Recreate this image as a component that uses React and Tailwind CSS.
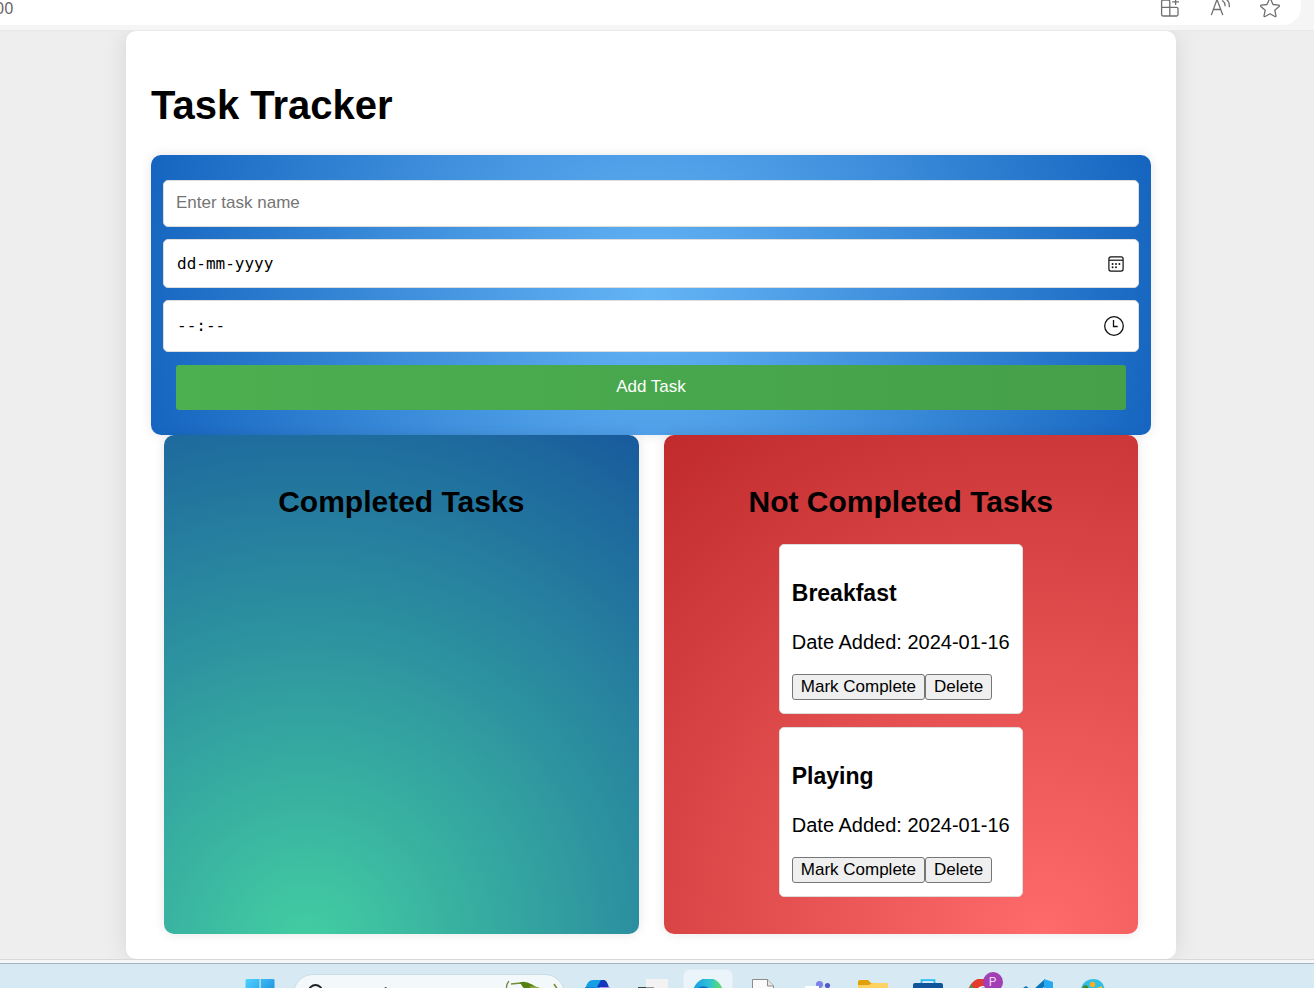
import React, { useState } from 'react';

const TASKS = [
  { id: 1, name: 'Breakfast', date: '2024-01-16' },
  { id: 2, name: 'Playing', date: '2024-01-16' },
];

function CalendarIcon() {
  return (
    <svg width="16" height="16" viewBox="0 0 16 16" fill="none" stroke="#111" strokeWidth="1.2" aria-hidden="true">
      <rect x="0.9" y="0.9" width="14.2" height="14.2" rx="2" />
      <path d="M1 4.2h14" />
      <g fill="#111" stroke="none">
        <circle cx="4.6" cy="8" r="0.95" />
        <circle cx="8" cy="8" r="0.95" />
        <circle cx="11.4" cy="8" r="0.95" />
        <circle cx="4.6" cy="11.2" r="0.95" />
        <circle cx="8" cy="11.2" r="0.95" />
      </g>
    </svg>
  );
}

function ClockIcon() {
  return (
    <svg width="20" height="20" viewBox="0 0 20 20" fill="none" stroke="#111" strokeWidth="1.3" aria-hidden="true">
      <circle cx="10" cy="10" r="9.3" />
      <path d="M9.5 4v6.5h4.2" />
    </svg>
  );
}

function PickerField({ label, placeholder, height, children }) {
  return (
    <div className={`flex items-center rounded-[5px] border border-[#ddd] bg-white pr-[14px] pl-[13px] ${height}`}>
      <input
        type="text"
        aria-label={label}
        placeholder={placeholder}
        className="min-w-0 flex-1 bg-transparent font-['DejaVu_Sans_Mono',monospace] text-base text-black outline-none placeholder:text-black"
      />
      <button type="button" aria-label={`Open ${label} picker`} className="shrink-0">
        {children}
      </button>
    </div>
  );
}

function TaskForm() {
  return (
    <form
      onSubmit={(e) => e.preventDefault()}
      className="relative flex flex-col gap-3 rounded-[10px] bg-[radial-gradient(circle,#64b5f6,#1565c0)] px-3 py-[25px] shadow-[0_0_12px_rgba(0,0,0,0.1)]"
    >
      <input
        type="text"
        aria-label="Task name"
        placeholder="Enter task name"
        className="h-[47px] w-full rounded-[5px] border border-[#ddd] bg-white px-3 pb-px text-[17px] outline-none placeholder:text-[#757575]"
      />
      <PickerField label="date" placeholder="dd-mm-yyyy" height="h-[49px]">
        <CalendarIcon />
      </PickerField>
      <PickerField label="time" placeholder="--:--" height="h-[52px]">
        <ClockIcon />
      </PickerField>
      <button
        type="submit"
        className="mx-[13px] mt-px h-[45px] rounded-[3px] bg-[linear-gradient(to_right,#4caf50,#45a049)] pb-px text-[17px] text-white"
      >
        Add Task
      </button>
    </form>
  );
}

const smallButton =
  'h-[26px] rounded-[3px] border border-[#767676] bg-[#efefef] px-2 text-[17px] leading-5 text-black';

function TaskCard({ task, onComplete, onDelete }) {
  return (
    <li className="rounded-[5px] border border-[#ddd] bg-white px-3 pt-3 pb-[13px]">
      <h3 className="my-[23px] text-[23px] leading-[27px] font-bold">{task.name}</h3>
      <p className="mb-5 text-xl leading-6">Date Added: {task.date}</p>
      <div className="flex">
        {onComplete && (
          <button type="button" onClick={onComplete} className={smallButton}>
            Mark Complete
          </button>
        )}
        <button type="button" onClick={onDelete} className={smallButton}>
          Delete
        </button>
      </div>
    </li>
  );
}

function Column({ title, background, children }) {
  return (
    <section className={`flex flex-1 flex-col items-center rounded-[10px] px-[25px] pt-[25px] pb-[37px] shadow-[0_0_12px_rgba(0,0,0,0.1)] ${background}`}>
      <h2 className="my-[25px] text-[30px] leading-[34px] font-bold">{title}</h2>
      <ul className="flex flex-col gap-[13px]">{children}</ul>
    </section>
  );
}

function BrowserBar() {
  return (
    <header className="h-[30px] shrink-0 bg-[#f5f5f5]">
      <div className="mr-[13px] -mt-[11px] flex h-9 items-center justify-between rounded-br-[18px] bg-white pt-0.5 pr-[21px]">
        <span className="-ml-[5px] font-['Noto_Sans',sans-serif] text-base leading-6 text-[#666]">00</span>
        <div className="flex gap-[30px] text-[#707070]">
          <button type="button" aria-label="Apps">
            <svg width="20" height="20" viewBox="0 0 20 20" fill="none" stroke="currentColor" strokeWidth="1.3">
              <path d="M9.8 9.4V3.5a1.4 1.4 0 0 0-1.4-1.4H3a1.4 1.4 0 0 0-1.4 1.4v13.1A1.4 1.4 0 0 0 3 18h13.600a1.4 1.4 0 0 0 1.400-1.400v-5.800a1.400 1.400 0 0 0-1.400-1.400H1.600M9.800 9.400V18M15.600 0.500v6.500M12.200 3.800h6.800" />
            </svg>
          </button>
          <button type="button" aria-label="Read aloud">
            <svg width="20" height="20" viewBox="0 0 20 20" fill="none" stroke="currentColor" strokeWidth="1.3" strokeLinecap="round">
              <path d="M1.500 16.600 7 1.500l5.600 15.100M3.400 11.500h7.300M12.500 2.800c1.700 1 2.600 2.600 2.600 5M15.500.6c2.600 1.600 4 4.300 3.800 8" />
            </svg>
          </button>
          <button type="button" aria-label="Add to favourites">
            <svg width="20" height="20" viewBox="0 0 20 20" fill="none" stroke="currentColor" strokeWidth="1.3" strokeLinejoin="round">
              <path d="M9.300 1.300q.7-1.200 1.400 0l2.300 5.200 5.700.6q1.300.3.4 1.300l-4.300 3.900 1.200 5.500q.1 1.200-1.100.7L10 15.700l-4.900 2.800q-1.200.5-1.100-.7l1.200-5.500L.9 8.400q-.9-1 .4-1.300L7 6.500z" />
            </svg>
          </button>
        </div>
      </div>
    </header>
  );
}

function AppButton({ label, active, children }) {
  return (
    <button
      type="button"
      aria-label={label}
      className={`flex size-12 shrink-0 items-center justify-center rounded-md ${active ? 'bg-[#ebf4fa] ring-1 ring-[#e2edf3]' : ''}`}
    >
      <svg width="30" height="30" viewBox="0 0 30 30" aria-hidden="true">
        {children}
      </svg>
    </button>
  );
}

function Taskbar() {
  return (
    <footer className="flex h-[60px] shrink-0 items-center justify-center gap-[7px] border-t border-[#a3b5be] bg-[#d7e9f2] pl-[38px]">
      <AppButton label="Start">
        <defs>
          <linearGradient id="start" x1="0" y1="0" x2="1" y2="1">
            <stop offset="0" stopColor="#4fd3ff" />
            <stop offset="1" stopColor="#0a78d4" />
          </linearGradient>
        </defs>
        <path fill="url(#start)" d="M1.5 0H14.500v14H0.5V1zM15.700 0H28.5l1 1v13H15.700zM0.5 15.2H14.500V29H1.5zM15.700 15.2h13.800V28l-1 1H15.700z" />
      </AppButton>
      <label className="mx-0.5 flex h-10 w-[272px] shrink-0 items-center rounded-full border border-[#c9dce5] bg-[#f3f8fb] pl-3">
        <svg width="20" height="20" viewBox="0 0 20 20" fill="none" stroke="#222" strokeWidth="2" aria-hidden="true">
          <circle cx="9.5" cy="7.5" r="6.5" />
          <path d="m5 12.5-4 4.5" />
        </svg>
        <input
          type="text"
          aria-label="Search"
          placeholder="Search"
          className="ml-3 w-0 flex-1 bg-transparent font-['Noto_Sans',sans-serif] text-lg outline-none placeholder:text-[#444]"
        />
        <svg width="62" height="30" viewBox="0 0 62 30" fill="none" aria-hidden="true">
          <path d="M7 2Q3 6 5 16" stroke="#71843b" strokeWidth="1.2" />
          <path d="m9 5 10-1 5 3M52 5l4 6" stroke="#748c35" strokeWidth="1.6" />
          <path d="M18 3.500q5-2 12 2l10 6-13 0-6-3z" fill="#55800f" />
          <path d="m27 7 9 1 7 4-10 1z" fill="#8ead43" />
        </svg>
      </label>
      <AppButton label="Copilot">
        <path d="M2 14Q3 1 10 1h9q4 0 6 8H15q-3 0-5 8z" fill="#169ee5" />
        <path d="m14 8 4-7h3q3 0 5 8z" fill="#1239bb" />
        <path d="M17 8h9q3 1 3 6H17z" fill="#bc8de9" />
        <path d="M2 8h11l-2 10H2z" fill="#1584d1" />
      </AppButton>
      <AppButton label="Task view">
        <path d="M8 0h22v20H8z" fill="#f3f3f3" />
        <path d="M0 8h16v16H0z" fill="#414347" />
        <path d="M8 8h8v8H8z" fill="#8e9092" />
      </AppButton>
      <AppButton label="Edge" active>
        <defs>
          <linearGradient id="edge" x1="0" y1="0" x2="1" y2="0">
            <stop offset="0" stopColor="#1b9de2" />
            <stop offset="0.55" stopColor="#2dc3d6" />
            <stop offset="1" stopColor="#64e056" />
          </linearGradient>
        </defs>
        <circle cx="15" cy="14" r="15" fill="url(#edge)" />
        <path d="M1 13q5-7 11-5.500 5 1 7 6.500L14 28Q2 26 1 13z" fill="#0d6fc0" />
      </AppButton>
      <AppButton label="Document">
        <path d="M4.500.5h15l6 6v23h-21z" fill="#fafafa" stroke="#8c8c8c" />
        <path d="M19.500.5v6.500h6.500" fill="#e6e6e6" stroke="#8c8c8c" />
      </AppButton>
      <AppButton label="Teams">
        <circle cx="16.500" cy="5.500" r="3.600" fill="#7b83eb" />
        <circle cx="24.500" cy="6.500" r="2.600" fill="#5059c9" />
        <path d="M2 7h14v14H2z" fill="#fff" />
        <path d="M10 11h18v12H10z" fill="#6870d8" />
      </AppButton>
      <AppButton label="File Explorer">
        <path d="M0 3q0-2 2-2h8l3 3h15q2 0 2 2v8H0z" fill="#dfa00c" />
        <path d="M0 6h11l3-2h16v22H0z" fill="#ffd363" />
      </AppButton>
      <AppButton label="Store">
        <path d="M8.500 6V1.200h13V6" fill="none" stroke="#20bdf2" strokeWidth="1.800" />
        <path d="M0 6q0-2 2-2h26q2 0 2 2v22H0z" fill="#10549a" />
      </AppButton>
      <div className="relative size-12 shrink-0">
        <AppButton label="Chrome">
          <circle cx="15" cy="14" r="15" fill="#e33b2e" />
          <path d="M0 14 3 5l8 14 3 10Q0 27 0 14z" fill="#31a350" />
          <circle cx="15" cy="14" r="7" fill="#fff" />
          <circle cx="15" cy="14" r="5.500" fill="#3275e8" />
        </AppButton>
        <span className="absolute top-0.5 right-1 flex size-5 items-center justify-center rounded-full bg-[#a33fb5] font-['Roboto',sans-serif] text-xs text-[#f0d6f3]">
          P
        </span>
      </div>
      <AppButton label="Visual Studio Code">
        <path d="m0 9 3-2 20 16v6z" fill="#0873b9" />
        <path d="m0 20 3 3L22 7V0z" fill="#0873b9" />
        <path d="M21 0l9 3v23l-9 3z" fill="#26a9f1" />
      </AppButton>
      <AppButton label="Paint">
        <path d="M2 13Q4 0 16 0q11 1 11 14 0 12-12 12Q3 26 2 13z" fill="#31bde4" />
        <circle cx="14.500" cy="5.500" r="2.700" fill="#f6b221" />
        <circle cx="7.500" cy="9" r="2.700" fill="#458a20" />
        <path d="m19 9 5-2 1 8-6 3z" fill="#f6c22e" />
      </AppButton>
    </footer>
  );
}

export default function App() {
  const [open, setOpen] = useState(TASKS);
  const [done, setDone] = useState([]);

  const complete = (task) => {
    setOpen(open.filter((t) => t.id !== task.id));
    setDone([...done, task]);
  };

  return (
    <div className="flex h-screen flex-col overflow-hidden bg-[#eee] font-['Liberation_Sans',Arial,sans-serif] text-black">
      <BrowserBar />
      <div className="shrink-0 overflow-hidden border-t border-[#e8e8e8] pr-3">
        <main className="mx-auto max-w-[1050px] rounded-[10px] bg-white p-[25px] shadow-[0_0_25px_rgba(0,0,0,0.1)]">
          <h1 className="my-[27px] text-[40px] leading-[45px] font-bold">Task Tracker</h1>
          <TaskForm />
          <div className="relative mx-[13px] flex gap-[25px]">
            <Column title="Completed Tasks" background="bg-[radial-gradient(circle_at_30%_102%,#43cea2,#185a9d)]">
              {done.map((task) => (
                <TaskCard key={task.id} task={task} onDelete={() => setDone(done.filter((t) => t.id !== task.id))} />
              ))}
            </Column>
            <Column title="Not Completed Tasks" background="bg-[radial-gradient(circle_at_80%_100%,#ff6b6b,#c02a2c)]">
              {open.map((task) => (
                <TaskCard
                  key={task.id}
                  task={task}
                  onComplete={() => complete(task)}
                  onDelete={() => setOpen(open.filter((t) => t.id !== task.id))}
                />
              ))}
            </Column>
          </div>
        </main>
      </div>
      <div className="h-1 shrink-0 border-t border-[#d8d8d8] bg-[#f6f6f6]" />
      <Taskbar />
    </div>
  );
}
